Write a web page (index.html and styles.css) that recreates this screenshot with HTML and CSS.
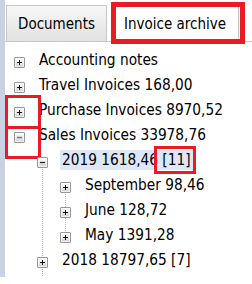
FILE: index.html
```html
<!DOCTYPE html>
<html>
<head>
<meta charset="utf-8">
<link rel="stylesheet" href="styles.css">
</head>
<body>
<div class="app">
  <div class="strip"></div>
  <div class="main">
    <div class="tabs">
      <div class="tab tab-docs">Documents</div>
      <div class="tab tab-active">Invoice archive<span class="tab-mark"></span></div>
    </div>
    <div class="tree">
      <ul class="level0">
        <li><div class="row"><span class="exp"><svg viewBox="0 0 9 9"><path d="M2 4.5h5M4.5 2v5" stroke="#111" stroke-width="1"/></svg></span><span class="label">Accounting notes</span></div></li>
        <li><div class="row"><span class="exp"><svg viewBox="0 0 9 9"><path d="M2 4.5h5M4.5 2v5" stroke="#111" stroke-width="1"/></svg></span><span class="label">Travel Invoices 168,00</span></div></li>
        <li><div class="row"><span class="exp mark-purchase"><svg viewBox="0 0 9 9"><path d="M2 4.5h5M4.5 2v5" stroke="#111" stroke-width="1"/></svg></span><span class="label">Purchase Invoices 8970,52</span></div></li>
        <li><div class="row"><span class="exp mark-sales"><svg viewBox="0 0 9 9"><path d="M2 4.5h5" stroke="#777" stroke-width="1.4"/></svg></span><span class="label">Sales Invoices 33978,76</span></div>
          <ul class="level1">
            <li><div class="row"><span class="exp"><svg viewBox="0 0 9 9"><path d="M2 4.5h5" stroke="#222" stroke-width="1.2"/></svg></span><span class="label label-sel">2019 1618,46 <span class="count">[11]</span></span></div>
              <ul class="level2">
                <li><div class="row"><span class="exp"><svg viewBox="0 0 9 9"><path d="M2 4.5h5M4.5 2v5" stroke="#111" stroke-width="1"/></svg></span><span class="label">September 98,46</span></div></li>
                <li><div class="row"><span class="exp"><svg viewBox="0 0 9 9"><path d="M2 4.5h5M4.5 2v5" stroke="#111" stroke-width="1"/></svg></span><span class="label">June 128,72</span></div></li>
                <li><div class="row"><span class="exp"><svg viewBox="0 0 9 9"><path d="M2 4.5h5M4.5 2v5" stroke="#111" stroke-width="1"/></svg></span><span class="label">May 1391,28</span></div></li>
              </ul>
            </li>
            <li><div class="row"><span class="exp"><svg viewBox="0 0 9 9"><path d="M2 4.5h5M4.5 2v5" stroke="#111" stroke-width="1"/></svg></span><span class="label">2018 18797,65 [7]</span></div></li>
          </ul>
        </li>
      </ul>
    </div>
  </div>
</div>
</body>
</html>
```

FILE: styles.css
```css
* { box-sizing: border-box; }

body {
  margin: 0;
  background: #fff;
  font-family: "DejaVu Sans Condensed", "DejaVu Sans", sans-serif;
  font-size: 15px;
  color: #000;
}

.app {
  display: flex;
  align-items: flex-start;
}

.strip {
  flex: none;
  width: 5px;
  height: 277px;
  background: #c9d1e2;
}

.main {
  flex: 1;
  min-width: 0;
}

.tabs {
  display: flex;
  align-items: flex-end;
  gap: 5px;
  height: 42px;
  padding-left: 1px;
  border-bottom: 1px solid #c8c8c8;
}

.tab {
  border: 1px solid #c8c8c8;
  border-bottom: none;
  line-height: 33px;
  padding: 2px 0 0 11px;
  white-space: nowrap;
}

.tab-docs {
  width: 101px;
  height: 36px;
  background: linear-gradient(#f7f7f7, #e1e1e1);
}

.tab-active {
  position: relative;
  width: 127px;
  height: 39px;
  padding-top: 4px;
  margin-bottom: -1px;
  background: #fff;
}

.tab-mark {
  position: absolute;
  left: -2px;
  top: -2px;
  width: 134px;
  height: 42px;
  border: 5px solid #e81c24;
}

.tree {
  height: 235px;
  overflow: hidden;
  padding: 8px 0 0 9px;
  font-size: 15.25px;
}

ul {
  list-style: none;
  margin: 0;
  padding: 0;
}

.row {
  display: flex;
  align-items: flex-start;
  height: 25px;
}

.exp {
  flex: none;
  position: relative;
  width: 11px;
  height: 11px;
  margin-top: 7px;
  margin-right: 14px;
  border: 1px solid #989898;
  border-radius: 1px;
  background: linear-gradient(#fdfdfd, #d2d2d2);
  box-shadow: inset 0 0 0 1px rgba(255, 255, 255, 0.6);
}

.exp svg {
  display: block;
  width: 9px;
  height: 9px;
}

.label {
  line-height: 20px;
  white-space: nowrap;
}

.label-sel {
  background: #dde7f8;
  margin-left: -2px;
  padding: 0 4px 0 2px;
}

.count {
  position: relative;
}

.count::after {
  content: "";
  position: absolute;
  left: -8px;
  right: -5px;
  top: -5px;
  bottom: -5px;
  border: 3px solid #e81c24;
}

.mark-purchase::after,
.mark-sales::after {
  content: "";
  position: absolute;
  left: -10px;
  width: 30px;
  border: 3px solid #e81c24;
}

.mark-purchase::after {
  top: -13px;
  height: 28px;
}

.mark-sales::after {
  top: -7px;
  height: 27px;
}

.level1,
.level2 {
  padding-left: 23px;
  background-image: repeating-linear-gradient(to bottom, #b2b2b2 0 1px, transparent 1px 2px);
  background-repeat: no-repeat;
  background-position: 28px 7px;
}

.level1 {
  background-size: 1px calc(100% - 7px);
  padding-bottom: 10px;
}

.level2 {
  background-size: 1px 61px;
}
```
